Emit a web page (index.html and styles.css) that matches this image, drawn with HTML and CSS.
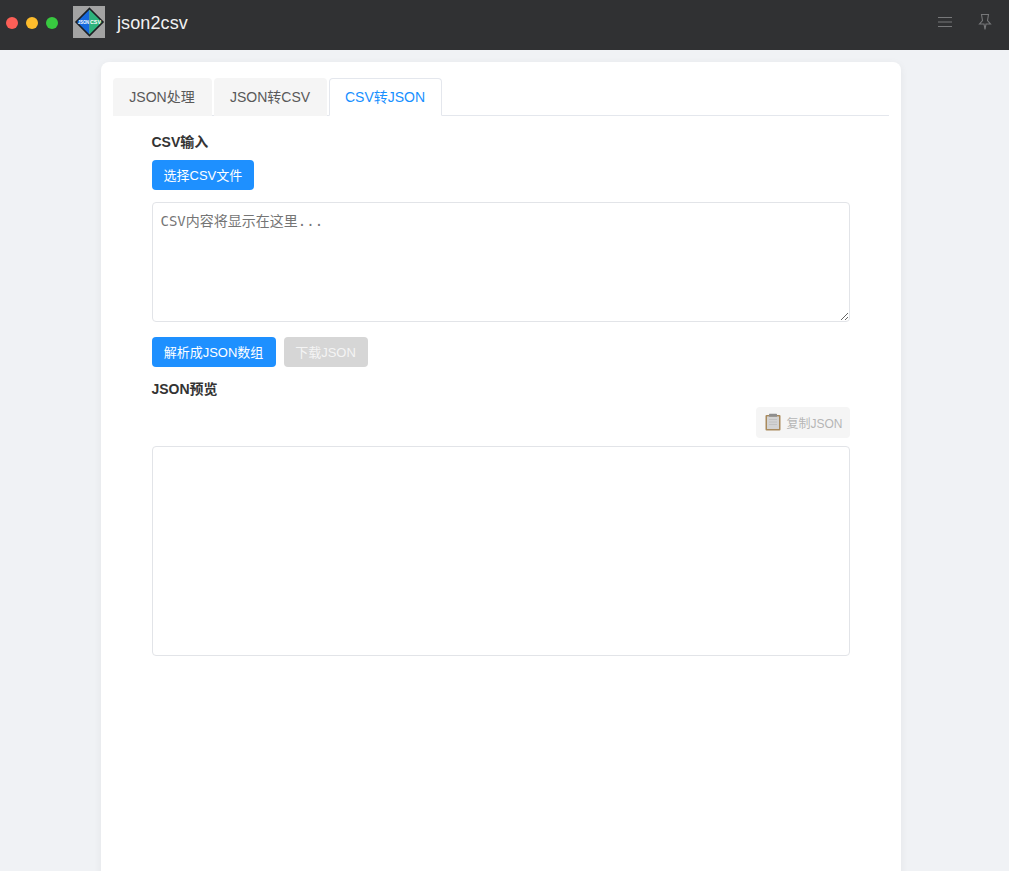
FILE: index.html
```html
<!DOCTYPE html>
<html lang="zh">
<head>
<meta charset="utf-8">
<title>json2csv</title>
<link rel="stylesheet" href="styles.css">
</head>
<body>
<header class="titlebar">
  <div class="lights">
    <span class="light light-red"></span>
    <span class="light light-yellow"></span>
    <span class="light light-green"></span>
  </div>
  <svg class="logo" width="32" height="32" viewBox="0 0 32 32">
    <rect width="32" height="32" fill="#a3a3a3"/>
    <path d="M16.5 2.5 L16.5 29.5 L3 16 Z" fill="#1668dc"/>
    <path d="M16.5 2.5 L30 16 L16.5 29.5 Z" fill="#2db37c"/>
    <path d="M16.5 2.5 L30 16 L16.5 29.5 L3 16 Z" fill="none" stroke="#1d2024" stroke-width="1.6"/>
    <text x="5" y="18" class="logo-text" textLength="11" lengthAdjust="spacingAndGlyphs">JSON</text>
    <text x="17" y="18" class="logo-text" textLength="11" lengthAdjust="spacingAndGlyphs">CSV</text>
  </svg>
  <span class="app-name">json2csv</span>
  <div class="title-actions">
    <svg width="16" height="16" viewBox="0 0 16 16" fill="none" stroke="#77787a" stroke-width="1">
      <path d="M1 3.5H15M1 8H15M1 12.5H15"/>
    </svg>
    <svg width="16" height="18" viewBox="0 0 16 18" fill="none" stroke="#77787a" stroke-width="1.1">
      <path d="M4.5 1.5H11.5L10.5 7.5L13.5 11H9L8 16.5L7 11H2.5L5.5 7.5Z"/>
    </svg>
  </div>
</header>
<main class="page">
  <section class="card">
    <nav class="tabs">
      <div class="tab tab-short">JSON处理</div>
      <div class="tab">JSON转CSV</div>
      <div class="tab tab-active">CSV转JSON</div>
    </nav>
    <div class="panel">
      <h3 class="label">CSV输入</h3>
      <button class="btn btn-primary btn-file">选择CSV文件</button>
      <textarea class="area area-input" placeholder="CSV内容将显示在这里..."></textarea>
      <div class="btn-row">
        <button class="btn btn-primary btn-parse">解析成JSON数组</button>
        <button class="btn btn-disabled">下载JSON</button>
      </div>
      <h3 class="label label-preview">JSON预览</h3>
      <div class="copy-row">
        <button class="copy-btn">
          <svg width="16" height="18" viewBox="0 0 16 18">
            <rect x="0.5" y="2" width="15" height="15.5" rx="1" fill="#a98a5c"/>
            <rect x="2" y="3.4" width="12" height="12.6" fill="#d3d3d3"/>
            <path d="M4 6.5H12M4 9H12M4 11.5H12" stroke="#c2c2c2" stroke-width="1"/>
            <rect x="4" y="0.8" width="8" height="3" rx="0.6" fill="#8e8e8e"/>
          </svg>
          <span>复制JSON</span>
        </button>
      </div>
      <div class="area area-output"></div>
    </div>
  </section>
</main>
</body>
</html>
```
FILE: styles.css
```css
* { box-sizing: border-box; }
html, body { margin: 0; height: 100%; overflow: hidden; }
body {
  background: #f0f2f5;
  font-family: "Liberation Sans", Arial, "Noto Sans CJK SC", sans-serif;
  font-size: 14px;
  color: #333;
}
.titlebar {
  height: 50px;
  background: #303133;
  display: flex;
  align-items: center;
  padding: 0 16px 0 6px;
}
.lights { display: flex; gap: 8px; margin-right: 15px; margin-top: -4px; }
.light { width: 12px; height: 12px; border-radius: 50%; }
.light-red { background: #fc5f57; }
.light-yellow { background: #fdbc2c; }
.light-green { background: #38c940; }
.logo { display: block; margin-top: -6px; }
.logo-text { font-size: 4.6px; font-weight: 700; fill: #fff; font-family: "Liberation Sans", sans-serif; }
.app-name { margin-left: 12px; font-size: 18px; letter-spacing: 0.1px; color: #f2f2f2; margin-top: -3px; }
.title-actions { margin-left: auto; display: flex; align-items: center; gap: 24px; margin-top: -6px; }
.title-actions svg { display: block; }
.page { display: flex; justify-content: center; padding: 12px 8px 0 0; }
.card {
  width: 800px;
  height: 900px;
  background: #fff;
  border-radius: 8px;
  padding: 16px 12px;
  box-shadow: 0 2px 8px rgba(0, 0, 0, 0.06);
}
.tabs { display: flex; gap: 2px; border-bottom: 1px solid #e4e7ed; height: 38px; }
.tab {
  width: 113px;
  height: 38px;
  text-align: center;
  line-height: 39px;
  white-space: nowrap;
  background: #f5f5f5;
  color: #595959;
  border-radius: 4px 4px 0 0;
}
.tab-short { width: 99px; }
.tab-active {
  background: #fff;
  color: #1890ff;
  border: 1px solid #e4e7ed;
  border-bottom-color: #fff;
  line-height: 37px;
}
.panel { padding: 0 39px; display: flex; flex-direction: column; align-items: flex-start; }
.label { margin: 18px 0 9px; font-size: 14px; line-height: 17px; font-weight: 700; color: #333; }
.label-preview { margin: 14px 0 9px; }
.btn {
  height: 30px;
  padding: 0 12px 2px;
  border: 0;
  border-radius: 4px;
  font: inherit;
  font-size: 13px;
  color: #fff;
  white-space: nowrap;
}
.btn-primary { background: #1e90ff; }
.btn-parse { width: 124px; padding-left: 0; padding-right: 0; }
.btn-disabled { width: 84px; padding-left: 0; padding-right: 0; background: #d6d6d6; color: #f4f4f4; }
.area {
  display: block;
  width: 698px;
  border: 1px solid #e2e4e8;
  border-radius: 4px;
  background: #fff;
}
.area-input {
  height: 120px;
  margin-top: 12px;
  padding: 9px 8px;
  font-family: "DejaVu Sans Mono", "Liberation Mono", "Noto Sans CJK SC", monospace;
  font-size: 14px;
  line-height: 18px;
  outline: none;
}
.area-input::placeholder { color: #757575; opacity: 1; }
.area-output { height: 210px; margin-top: 8px; }
.btn-row { display: flex; gap: 8px; margin-top: 15px; }
.copy-row { width: 698px; display: flex; justify-content: flex-end; }
.copy-btn {
  width: 94px;
  height: 31px;
  display: flex;
  align-items: center;
  gap: 6px;
  border: 0;
  border-radius: 4px;
  padding: 0 0 1px 9px;
  background: #f5f5f5;
  font: inherit;
  font-size: 12px;
  color: #b5b5b5;
}
```
